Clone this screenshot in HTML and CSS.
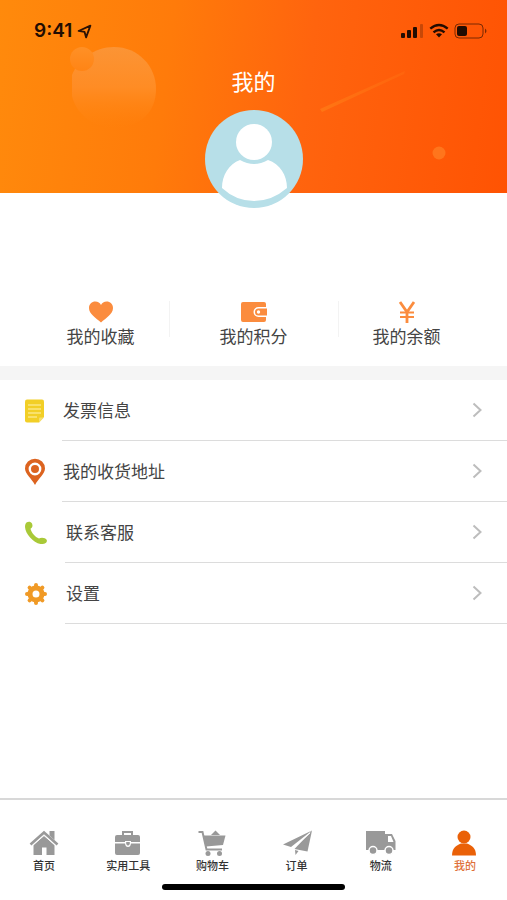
FILE: index.html
```html
<!DOCTYPE html>
<html lang="zh-CN">
<head>
<meta charset="utf-8">
<meta name="viewport" content="width=device-width, initial-scale=1">
<title>我的</title>
<link rel="stylesheet" href="styles.css">
</head>
<body>
<header class="hero">
  <svg class="hero-art" viewBox="0 0 507 193" preserveAspectRatio="none" aria-hidden="true">
    <defs>
      <linearGradient id="ball" x1="0" y1="0" x2="0" y2="1">
        <stop offset="0" stop-color="#fb9435"/>
        <stop offset="0.5" stop-color="#ff8c24"/>
        <stop offset="1" stop-color="#ff8410" stop-opacity="0"/>
      </linearGradient>
      <linearGradient id="small-ball" x1="0" y1="0" x2="0" y2="1">
        <stop offset="0" stop-color="#ff9026"/>
        <stop offset="1" stop-color="#ff8415"/>
      </linearGradient>
      <linearGradient id="streak" x1="0" y1="1" x2="1" y2="0">
        <stop offset="0" stop-color="#ff7614"/>
        <stop offset="1" stop-color="#ff6c10" stop-opacity="0.5"/>
      </linearGradient>
    </defs>
    <path fill="url(#ball)" d="M72 75C78 60 94 47 114 47C138 47 156 66 156 89C156 111 142 127 114 128C92 128 76 113 72 96Z"/>
    <circle cx="82" cy="59" r="12" fill="url(#small-ball)"/>
    <path fill="url(#streak)" d="M320 109L405 71L404 74L322 112Z"/>
    <circle cx="439" cy="153" r="6.500" fill="#ff751c"/>
  </svg>
  <div class="status">
    <div class="clock">
      <span>9:41</span>
      <svg width="15" height="15" viewBox="0 0 14 14" aria-hidden="true"><path d="M1.500 6.500L12.500 1.500L8.500 12.500L7 7.300Z" fill="none" stroke="#2a1205" stroke-width="1.700" stroke-linejoin="round"/></svg>
    </div>
    <svg width="88" height="16" viewBox="0 0 88 16" aria-hidden="true">
      <g fill="#210c02">
        <rect x="1" y="10" width="4" height="5" rx="1"/><rect x="7" y="7" width="4" height="8" rx="1"/><rect x="13" y="4" width="4" height="11" rx="1"/>
        <rect x="20" y="1" width="3" height="14" rx="1" opacity=".25"/>
        <rect x="57" y="3" width="10" height="10" rx="2"/>
        <path d="M85 5.500Q88 8 85 10.500Z" opacity=".6"/>
        <path d="M36 11.300Q39 9.300 42 11.300L39 14.500Z"/>
      </g>
      <g fill="none" stroke="#210c02" stroke-width="2.400"><path d="M30.300 5.600Q39 -1.600 47.700 5.600"/><path d="M33.500 9.300Q39 4.700 44.500 9.300"/></g>
      <rect x="55" y="1" width="28" height="14" rx="4" fill="none" stroke="#210c02" stroke-opacity=".6"/>
    </svg>
  </div>
  <h1 class="title">我的</h1>
  <svg class="avatar" viewBox="0 0 98 98" role="img" aria-label="头像">
    <circle cx="49" cy="49" r="49" fill="#b7dfe8"/>
    <path fill="#fff" d="M35 50Q49 58 63 50C75 54 82 65 82 78Q67 91 49 91Q31 91 17 78C17 65 24 54 35 50Z"/>
    <circle cx="49" cy="32" r="20.500" fill="#b7dfe8"/>
    <circle cx="49" cy="32" r="18" fill="#fff"/>
  </svg>
</header>

<main>
  <nav class="stats" aria-label="我的资产">
    <a class="stat" href="#favorites">
      <svg width="26" height="22" viewBox="0 0 26 22" aria-hidden="true"><path fill="#fb8c3e" d="M13 21.500C8 17 1 13 1 7C1 3 4 0.500 7.300 0.500C10 0.500 12 2 13 4C14 2 16 0.500 18.700 0.500C22 0.500 25 3 25 7C25 13 18 17 13 21.500Z"/></svg>
      <span>我的收藏</span>
    </a>
    <a class="stat" href="#points">
      <svg width="26" height="22" viewBox="0 0 26 22" aria-hidden="true"><path fill="#fb8c3e" d="M2 1H23Q25 1 25 3V6H17.500A5 5 0 0 0 17.500 16H25V19Q25 21 23 21H2Q0 21 0 19V3Q0 1 2 1Z"/><path fill="#fb8c3e" d="M17.500 7.500H26V14.500H17.500A3.500 3.500 0 0 1 17.500 7.500Z"/><circle cx="17.500" cy="11" r="1.700" fill="#fff"/></svg>
      <span>我的积分</span>
    </a>
    <a class="stat" href="#balance">
      <svg width="26" height="22" viewBox="0 0 26 22" aria-hidden="true"><path fill="none" stroke="#fb8c3e" stroke-width="2.800" d="M6 1L13 11L20 1M13 10V22"/><path stroke="#fb8c3e" stroke-width="2" d="M6 11.500H20M6 16H20"/></svg>
      <span>我的余额</span>
    </a>
  </nav>

  <ul class="menu">
    <li><a class="row" href="#invoice">
      <svg class="row-icon" viewBox="0 0 24 28" aria-hidden="true"><path fill="#f2cf27" d="M3 2.500H18Q20 2.500 20 4.500V20L15 25.500H3Q1 25.500 1 23.500V4.500Q1 2.500 3 2.500Z"/><path fill="#f5df70" d="M15 25.500V21.500Q15 20.500 16 20.500H20Z"/><path stroke="#fff3b0" stroke-width="1.200" d="M4 8H17M4 12H17M4 16H17M4 20H13"/></svg>
      <span class="row-body">发票信息<svg class="chevron" viewBox="0 0 10 16" aria-hidden="true"><path d="M1.500 1.500L8.500 8L1.500 14.500"/></svg></span>
    </a></li>
    <li><a class="row" href="#address">
      <svg class="row-icon" viewBox="0 0 24 28" aria-hidden="true"><path fill="#dc631f" d="M11 27C8 21 1 16 1 10.500A10 9.800 0 0 1 21 10.500C21 16 14 21 11 27Z"/><circle cx="11" cy="11" r="5.200" fill="#dc631f" stroke="#fff" stroke-width="2.400"/></svg>
      <span class="row-body">我的收货地址<svg class="chevron" viewBox="0 0 10 16" aria-hidden="true"><path d="M1.500 1.500L8.500 8L1.500 14.500"/></svg></span>
    </a></li>
    <li><a class="row row-inset" href="#service">
      <svg class="row-icon" viewBox="0 0 24 28" aria-hidden="true"><path fill="#a9c938" d="M1.500 5C2.500 2.500 6.500 2 8 4.500C9 7 8.500 8.500 6.500 9.800C7.500 14 11 18 15 19.500C17 18 21.500 18.500 22.800 21C23.500 24 20 25.500 16.500 25C9 23.500 1.500 15 1 8Q1 6 1.500 5Z"/></svg>
      <span class="row-body">联系客服<svg class="chevron" viewBox="0 0 10 16" aria-hidden="true"><path d="M1.500 1.500L8.500 8L1.500 14.500"/></svg></span>
    </a></li>
    <li><a class="row row-inset" href="#settings">
      <svg class="row-icon" viewBox="0 0 24 28" aria-hidden="true"><circle cx="12" cy="14" r="6" fill="none" stroke="#f09a26" stroke-width="5"/><path stroke="#f09a26" stroke-width="4" stroke-linecap="round" d="M12 5V5.500M12 22.500V23M3 14H3.500M20.500 14H21M5.600 7.600L6 8M18 20L18.400 20.400M5.600 20.400L6 20M18 8L18.400 7.600"/></svg>
      <span class="row-body">设置<svg class="chevron" viewBox="0 0 10 16" aria-hidden="true"><path d="M1.500 1.500L8.500 8L1.500 14.500"/></svg></span>
    </a></li>
  </ul>
</main>

<footer class="dock">
  <nav class="tabs" aria-label="主导航">
    <a class="tab" href="#home">
      <svg class="tab-icon" viewBox="0 0 30 26" aria-hidden="true"><path d="M4.500 15L15 5.500L25.500 15V25H17.500V17.500H13V25H4.500Z"/><path d="M20.500 1H25.500V10L20.500 5.500Z"/><path fill="none" stroke="#fff" d="M3 16L15 5.500L27 16"/><path fill="none" stroke="#999" stroke-width="2.600" d="M1.500 14.500L15 2.500L28.500 14.500"/></svg>
      <span>首页</span>
    </a>
    <a class="tab" href="#tools">
      <svg class="tab-icon" viewBox="0 0 30 26" aria-hidden="true"><path fill="none" stroke="#999" stroke-width="2" d="M10 5V2H19V5"/><path d="M4 5H25Q27 5 27 7V12H18V11H12V12H2V7Q2 5 4 5ZM2 13.500H12Q12.500 17 15 17Q17.500 17 18 13.500H27V23Q27 25 25 25H4Q2 25 2 23Z"/><path d="M13.200 12H16.800V14Q15 17 13.200 14Z"/></svg>
      <span>实用工具</span>
    </a>
    <a class="tab" href="#cart">
      <svg class="tab-icon" viewBox="0 0 30 26" aria-hidden="true"><path d="M6.500 5.500H28.500L26 15L9 16.500Z"/><path d="M14 5L18.500 0.500L23 5Z"/><path fill="none" stroke="#999" stroke-width="2" d="M1.500 2H5.500L9.500 19.500H25"/><circle cx="11" cy="23.500" r="2.500"/><circle cx="22.500" cy="23.500" r="2.500"/></svg>
      <span>购物车</span>
    </a>
    <a class="tab" href="#orders">
      <svg class="tab-icon" viewBox="0 0 30 26" aria-hidden="true"><path d="M30 0.500L1 14.500L9 17ZM13 20L16.500 21L13.500 25Z"/><path d="M30 0.500L12.500 19L25.500 21.500Z"/><path fill="none" stroke="#fff" d="M28 3L11 18.500"/></svg>
      <span>订单</span>
    </a>
    <a class="tab" href="#shipping">
      <svg class="tab-icon" viewBox="0 0 30 26" aria-hidden="true"><path d="M0 1H19V20H0Z"/><path fill-rule="evenodd" d="M19 4H26L29.500 11V20H19ZM22 6V12H27.500L25 6Z"/><g stroke="#fff" stroke-width="1.500"><circle cx="7" cy="20.500" r="4"/><circle cx="23" cy="20.500" r="4"/></g></svg>
      <span>物流</span>
    </a>
    <a class="tab tab-active" href="#me" aria-current="page">
      <svg class="tab-icon" viewBox="0 0 30 26" aria-hidden="true"><circle cx="14" cy="7" r="6.500"/><path d="M2 25.500C2 18 6 15.500 11 13.500H17C22 15.500 26 18 26 25.500Z"/></svg>
      <span>我的</span>
    </a>
  </nav>
  <div class="home-bar"></div>
</footer>
</body>
</html>
```

FILE: styles.css
```css
* {
  box-sizing: border-box;
}

body {
  display: flex;
  flex-direction: column;
  min-height: 100vh;
  margin: 0;
  background: #fff;
  color: #444;
  font-family: "Noto Sans CJK SC", sans-serif;
}

a {
  color: inherit;
  text-decoration: none;
}

svg {
  display: block;
  flex: none;
}

.hero {
  position: relative;
  display: flex;
  flex-direction: column;
  align-items: center;
  height: 193px;
  background: linear-gradient(97deg, #ff8a0c 0%, #ff7b0a 33%, #ff640e 60%, #ff5303 100%);
}

.hero-art {
  position: absolute;
  inset: 0;
  width: 100%;
  height: 100%;
}

.status {
  position: relative;
  display: flex;
  flex: none;
  align-items: center;
  justify-content: space-between;
  width: 100%;
  height: 62px;
  padding: 0 19px 0 34px;
}

.clock {
  display: flex;
  align-items: center;
  gap: 5px;
  color: #210c02;
  font: 600 19px/24px Inter, sans-serif;
}

.title {
  position: relative;
  margin: 2px 0 0;
  color: #fff;
  font-size: 22px;
  font-weight: 400;
  line-height: 32px;
}

.avatar {
  position: relative;
  width: 98px;
  height: 98px;
  margin-top: 14px;
}

.stats {
  display: grid;
  grid-template-columns: repeat(3, 1fr);
  padding: 108px 0 18px;
  border-bottom: 14px solid #f5f5f5;
}

.stat {
  display: flex;
  flex-direction: column;
  align-items: center;
  gap: 1px;
  font-size: 17px;
  line-height: 24px;
}

.stat:first-child {
  padding-left: 32px;
}

.stat:last-child {
  padding-right: 32px;
}

.stat + .stat {
  background: linear-gradient(#f3f3f3, #f3f3f3) left top / 1px 36px no-repeat;
}

.menu {
  margin: 0;
  padding: 0;
  list-style: none;
}

.row {
  display: flex;
  align-items: center;
  gap: 14px;
  padding-left: 24px;
  font-size: 17px;
}

.row-inset {
  gap: 17px;
}

.row-icon {
  width: 24px;
  height: 28px;
}

.row-body {
  display: flex;
  flex: 1;
  align-items: center;
  justify-content: space-between;
  padding: 18px 25px 18px 1px;
  border-bottom: 1px solid #dcdcdc;
  line-height: 24px;
}

.chevron {
  width: 10px;
  height: 16px;
  fill: none;
  stroke: #bdbdbd;
  stroke-width: 2;
}

.dock {
  margin-top: auto;
  padding: 30px 0 10px;
  border-top: 2px solid #d8d8d8;
}

.tabs {
  display: grid;
  grid-template-columns: repeat(6, 1fr);
  padding-left: 2px;
}

.tab {
  display: flex;
  flex-direction: column;
  align-items: center;
  gap: 1px;
  color: #333;
  font-size: 11px;
  font-weight: 500;
  line-height: 16px;
}

.tab-icon {
  width: 30px;
  height: 26px;
  fill: #999;
}

.tab-active {
  color: #e0713a;
}

.tab-active .tab-icon {
  fill: #ea6108;
}

.home-bar {
  width: 36%;
  height: 6px;
  margin: 11px auto 0;
  border-radius: 3px;
  background: #000;
}
```
